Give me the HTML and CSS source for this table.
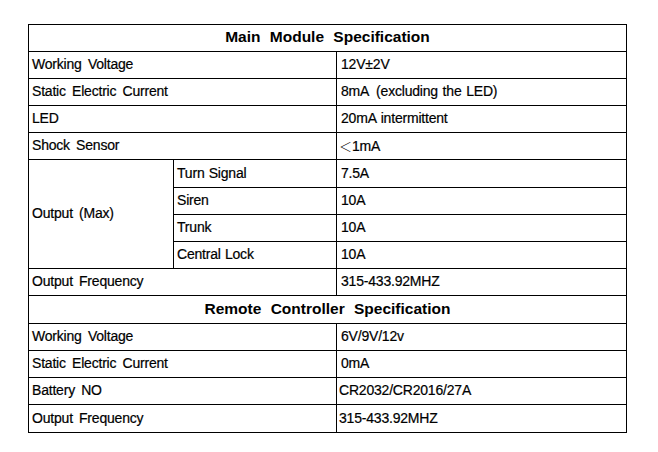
FILE: index.html
```html
<!DOCTYPE html>
<html>
<head>
<meta charset="utf-8">
<link rel="stylesheet" href="styles.css">
</head>
<body>
<table class="spec">
  <colgroup>
    <col class="c1"><col class="c2"><col class="c3">
  </colgroup>
  <tr class="r"><th colspan="3" class="head">Main Module Specification</th></tr>
  <tr class="r"><td colspan="2">Working Voltage</td><td class="val">12V±2V</td></tr>
  <tr class="r"><td colspan="2">Static Electric Current</td><td class="val">8mA <span class="wide">(excluding the LED)</span></td></tr>
  <tr class="r"><td colspan="2">LED</td><td class="val">20mA intermittent</td></tr>
  <tr class="r"><td colspan="2">Shock Sensor</td><td class="val"><span class="lt">＜</span>1mA</td></tr>
  <tr class="r tall"><td rowspan="4">Output (Max)</td><td class="sub">Turn Signal</td><td class="val">7.5A</td></tr>
  <tr class="r"><td class="sub">Siren</td><td class="val">10A</td></tr>
  <tr class="r"><td class="sub">Trunk</td><td class="val">10A</td></tr>
  <tr class="r"><td class="sub">Central Lock</td><td class="val">10A</td></tr>
  <tr class="r"><td colspan="2">Output Frequency</td><td class="val">315-433.92MHZ</td></tr>
  <tr class="r tall"><th colspan="3" class="head">Remote Controller Specification</th></tr>
  <tr class="r"><td colspan="2">Working Voltage</td><td class="val">6V/9V/12v</td></tr>
  <tr class="r"><td colspan="2">Static Electric Current</td><td class="val">0mA</td></tr>
  <tr class="r"><td colspan="2">Battery NO</td><td class="val tight">CR2032/CR2016/27A</td></tr>
  <tr class="r tall"><td colspan="2">Output Frequency</td><td class="val tight">315-433.92MHZ</td></tr>
</table>
</body>
</html>
```

FILE: styles.css
```css
html, body {
  margin: 0;
  padding: 0;
  background: #ffffff;
}

body {
  padding: 24px 0 0 28px;
  font-family: "Liberation Sans", Arial, "Noto Sans CJK SC", sans-serif;
  color: #000000;
}

.spec {
  border-collapse: collapse;
  table-layout: fixed;
  width: 598px;
}

.c1 { width: 145px; }
.c2 { width: 163px; }
.c3 { width: 290px; }

.spec th,
.spec td {
  border: 1px solid #000000;
  padding: 0 0 2px 3px;
  height: 26px;
  box-sizing: border-box;
  vertical-align: middle;
  white-space: nowrap;
  font-size: 14px;
  letter-spacing: -0.2px;
  word-spacing: 2.5px;
  text-align: left;
  font-weight: normal;
  -webkit-text-stroke: 0.2px #000000;
}

.spec .r { height: 27px; }
.spec .r.tall { height: 28px; }

.spec th.head {
  text-align: center;
  font-weight: bold;
  font-size: 15.5px;
  letter-spacing: 0;
  word-spacing: 5px;
  padding: 0 0 2px 0;
  -webkit-text-stroke: 0;
}

.spec td.val {
  padding-left: 4px;
  word-spacing: 1px;
}
.spec td.val.tight { padding-left: 2px; }
.spec td.sub {
  padding-left: 3px;
  word-spacing: 0.5px;
}

.wide { margin-left: 3px; }

.lt {
  font-family: "Noto Sans CJK SC", sans-serif;
  font-weight: 300;
  font-size: 13px;
  letter-spacing: 0;
  margin-left: -2px;
  -webkit-text-stroke: 0;
}
```
